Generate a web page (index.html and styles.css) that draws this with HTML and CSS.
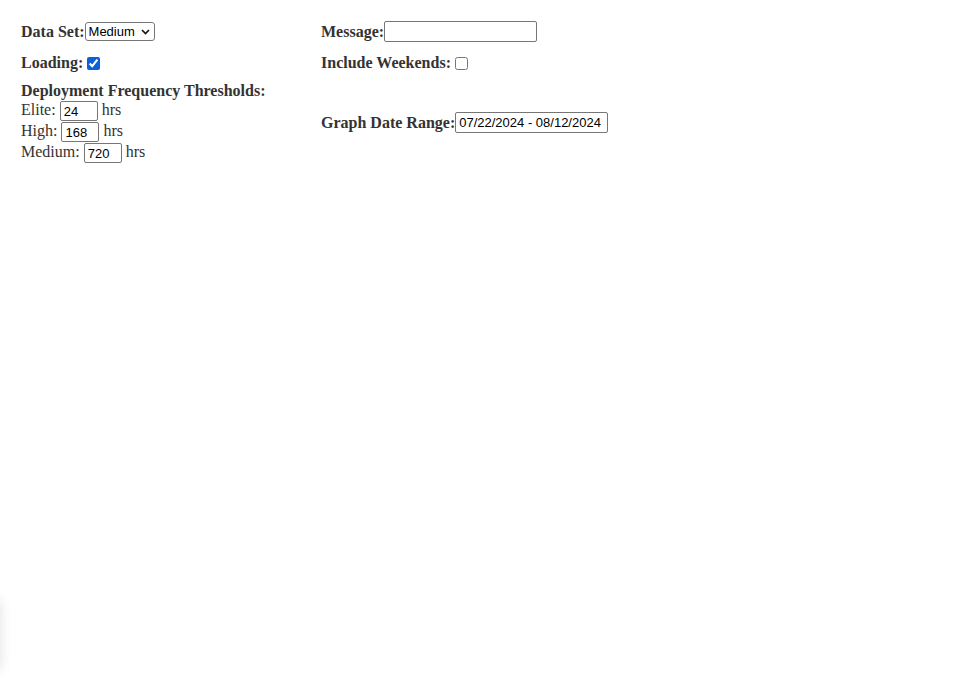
FILE: index.html
```html
<!DOCTYPE html>
<html>
<head>
<meta charset="utf-8">
<link rel="stylesheet" href="styles.css">
</head>
<body>
<div class="form">
  <div class="cell"><label class="lbl">Data Set:</label><span class="select-wrap"><select class="select"><option>Medium</option></select><svg class="chev" width="9" height="6" viewBox="0 0 9 6"><path d="M1 1l3.5 3.5L8 1" fill="none" stroke="#111" stroke-width="1.6"/></svg></span></div>
  <div class="cell"><label class="lbl">Message:</label><input class="field wide" type="text" value=""></div>

  <div class="cell r2"><label class="lbl">Loading:</label> <input class="check" type="checkbox" checked></div>
  <div class="cell r2"><label class="lbl">Include Weekends:</label> <input class="check" type="checkbox"></div>

  <div class="cell thresholds">
    <div class="lbl">Deployment Frequency Thresholds:</div>
    <div class="lines">
      <div class="line">Elite: <input class="field small" type="text" value="24"> hrs</div>
      <div class="line">High: <input class="field small" type="text" value="168"> hrs</div>
      <div class="line">Medium: <input class="field small" type="text" value="720"> hrs</div>
    </div>
  </div>
  <div class="cell"><label class="lbl">Graph Date Range:</label><input class="field wide" type="text" value="07/22/2024 - 08/12/2024"></div>
</div>
<div class="side-shadow"></div>
</body>
</html>
```
FILE: styles.css
```css
html, body {
  margin: 0;
  background: #fff;
}
body {
  font-family: "Liberation Serif", "Times New Roman", serif;
  font-size: 16px;
  color: #333;
}
.form {
  display: grid;
  grid-template-columns: 300px auto;
  align-items: center;
  row-gap: 10px;
  padding: 21px 21px;
}
.cell {
  display: flex;
  align-items: center;
  line-height: 18px;
}
.r2 {
  margin-top: 2px;
}
.lbl {
  font-weight: bold;
}
.thresholds {
  display: block;
}
.lines {
  margin-top: -1px;
  margin-bottom: 1px;
}
.line {
  line-height: 21px;
  height: 21px;
}
.field {
  font-family: "Liberation Sans", Arial, sans-serif;
  font-size: 13px;
  color: #000;
  border: 1px solid #767676;
  border-radius: 2px;
  padding: 0 3px;
  box-sizing: border-box;
  background: #fff;
  outline: none;
}
.wide {
  width: 153px;
  height: 21px;
}
.small {
  width: 38px;
  height: 20px;
  vertical-align: middle;
  margin: 0;
}
.select-wrap {
  position: relative;
  display: inline-block;
}
.select {
  appearance: none;
  -webkit-appearance: none;
  font-family: "Liberation Sans", Arial, sans-serif;
  font-size: 13px;
  color: #000;
  width: 70px;
  height: 19px;
  box-sizing: border-box;
  border: 1px solid #767676;
  border-radius: 3px;
  padding: 0 0 0 3px;
  background: #fff;
  margin: 0;
  display: block;
}
.chev {
  position: absolute;
  right: 5px;
  top: 7px;
  pointer-events: none;
}
.check {
  width: 13px;
  height: 13px;
  margin: 0 0 0 4px;
  accent-color: #0b62d6;
}
.side-shadow {
  position: fixed;
  left: -40px;
  top: 600px;
  width: 40px;
  height: 70px;
  box-shadow: 0 0 12px rgba(0, 0, 0, 0.12);
}
```
